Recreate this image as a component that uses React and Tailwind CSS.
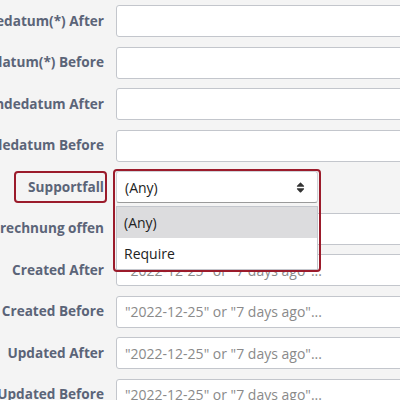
import { FaSort } from 'react-icons/fa';

const PH = '"2022-12-25" or "7 days ago"...';

const rows = [
  { label: 'Vertragsendedatum(*) After' },
  { label: 'Vertragsendedatum(*) Before' },
  { label: 'Kündigungsendedatum After' },
  { label: 'Kündigungsendedatum Before' },
  { label: 'Supportfall' },
  { label: 'Abrechnung offen' },
  { label: 'Created After', placeholder: PH },
  { label: 'Created Before', placeholder: PH },
  { label: 'Updated After', placeholder: PH },
  { label: 'Updated Before', placeholder: PH },
];

const Label = ({ text, marked }) => (
  <div className="w-[104px] shrink-0 flex justify-end items-center">
    <span className="relative whitespace-nowrap font-bold text-[13.6px] text-[#5b6478]">
      {text}
      {marked && (
        <span className="absolute -left-[14px] -right-[3px] -top-[6px] -bottom-[6px] border-2 border-[#9b1b2b] rounded-[4px]" />
      )}
    </span>
  </div>
);

const SupportSelect = () => (
  <div className="relative w-[202px] shrink-0 h-full">
    <div className="h-full bg-white border border-[#d0d3d8] border-b-[#9a9a9a] border-b-dotted rounded-[3px] flex items-center justify-between pl-[8px] pr-[10px] text-[14px] text-[#222]">
      <span>(Any)</span>
      <FaSort className="text-[#333] text-[13px]" />
    </div>
    <div className="absolute left-0 right-0 top-[35px] z-10 bg-white border border-[#c3c6cc] text-[14px] text-[#222]">
      <div className="h-[31px] flex items-center px-[7px] bg-[#dcdcde]">(Any)</div>
      <div className="h-[31px] flex items-center px-[7px]">Require</div>
    </div>
    <div className="absolute -left-[3px] -right-[3px] -top-[2px] h-[103px] z-20 border-2 border-[#9b1b2b] rounded-[4px] pointer-events-none" />
  </div>
);

export default function App() {
  return (
    <div
      className="w-[400px] h-[400px] overflow-hidden bg-[#f4f4f4] pt-[5px]"
      style={{ fontFamily: '"Open Sans", "Noto Sans", sans-serif' }}
    >
      <div className="flex flex-col gap-[9.5px]">
        {rows.map((r, i) => (
          <div key={i} className="flex items-center gap-[12px] h-[32px]">
            <Label text={r.label} marked={r.label === 'Supportfall'} />
            {r.label === 'Supportfall' ? (
              <SupportSelect />
            ) : (
              <div className="w-[300px] shrink-0 h-full bg-white border border-[#c3c6cc] rounded-[3px] flex items-center px-[8px] text-[14px] text-[#8a8a8a] whitespace-nowrap">
                {r.placeholder || ''}
              </div>
            )}
          </div>
        ))}
      </div>
    </div>
  );
}
